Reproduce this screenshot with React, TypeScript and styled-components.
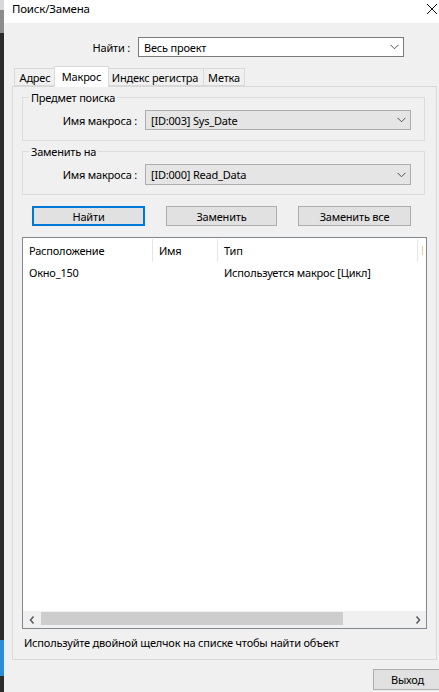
import React from "react";
import styled, { createGlobalStyle } from "styled-components";

const Global = createGlobalStyle`
  html, body { margin: 0; padding: 0; background: #2b2b2b; }
  body {
    font-family: "Noto Sans", "Liberation Sans", sans-serif;
    font-size: 11px;
    letter-spacing: -0.2px;
    color: #000;
  }
  * { box-sizing: border-box; }
`;

const Root = styled.div`
  display: flex;
  width: 439px;
  height: 692px;
  overflow: hidden;
`;

const LeftStrip = styled.div`
  width: 4px;
  flex: none;
  background: linear-gradient(
    to bottom,
    #d8d8d8 0px,
    #d8d8d8 10px,
    #8c8c8c 10px,
    #8c8c8c 33px,
    #2b2b2b 33px,
    #2b2b2b 640px,
    #2e8bd4 640px,
    #2e8bd4 676px,
    #2b2b2b 676px
  );
`;

const Window = styled.div`
  width: 435px;
  height: 692px;
  flex: none;
  background: #f0f0f0;
  display: flex;
  flex-direction: column;
  overflow: hidden;
`;

const TitleBar = styled.div`
  height: 23px;
  flex: none;
  background: #fff;
  display: flex;
  align-items: flex-start;
  justify-content: space-between;
  padding: 1px 2px 0 8px;
  line-height: 16px;
  font-size: 11.5px;
`;

const CloseButton = styled.div`
  width: 10px;
  height: 10px;
  margin-top: 3px;
  display: flex;
`;

const FindRow = styled.div`
  display: flex;
  align-items: center;
  margin-top: 14px;
  height: 20px;
`;

const FieldLabel = styled.div<{ $w: number }>`
  width: ${(p) => p.$w}px;
  text-align: right;
  white-space: nowrap;
  margin-right: 8px;
  flex: none;
`;

const Select = styled.div<{ $gray?: boolean; $h?: number }>`
  width: 266px;
  height: ${(p) => p.$h ?? 20}px;
  flex: none;
  display: flex;
  align-items: center;
  justify-content: space-between;
  padding: 0 4px 0 5px;
  background: ${(p) => (p.$gray ? "#e5e5e5" : "#ffffff")};
  border: 1px solid ${(p) => (p.$gray ? "#adadad" : "#7a7a7a")};
  white-space: nowrap;
`;

const TabStrip = styled.div`
  display: flex;
  align-items: flex-end;
  height: 20px;
  margin-top: 9px;
  padding-left: 11px;
  position: relative;
  z-index: 1;
`;

const Tab = styled.div<{ $w: number; $active?: boolean }>`
  width: ${(p) => p.$w}px;
  height: ${(p) => (p.$active ? 21 : 18)}px;
  margin: ${(p) => (p.$active ? "0 -2px -1px -2px" : "0 0 0 -1px")};
  border: 1px solid #d9d9d9;
  border-bottom: ${(p) => (p.$active ? "none" : "1px solid #d9d9d9")};
  background: ${(p) => (p.$active ? "#ffffff" : "#f0f0f0")};
  display: flex;
  align-items: ${(p) => (p.$active ? "flex-start" : "center")};
  padding-top: ${(p) => (p.$active ? "2px" : "0")};
  justify-content: center;
  white-space: nowrap;
  position: relative;
  z-index: ${(p) => (p.$active ? 2 : 1)};
`;

const Panel = styled.div`
  margin-left: 8px;
  width: 425px;
  height: 574px;
  flex: none;
  border: 1px solid #d9d9d9;
  background: #f0f0f0;
  padding: 10px 11px 0 9px;
  display: flex;
  flex-direction: column;
`;

const GroupBox = styled.div<{ $mt?: number }>`
  width: 403px;
  height: 44px;
  margin-top: ${(p) => p.$mt ?? 0}px;
  border: 1px solid #dcdcdc;
  display: flex;
  flex-direction: column;
`;

const GroupTitle = styled.div`
  align-self: flex-start;
  margin: -8px 0 0 6px;
  padding: 0 2px;
  height: 16px;
  line-height: 16px;
  background: #f0f0f0;
`;

const GroupRow = styled.div`
  display: flex;
  align-items: center;
  margin-top: 4px;
`;

const ButtonRow = styled.div`
  display: flex;
  gap: 21px;
  padding-left: 10px;
  margin-top: 11px;
`;

const Button = styled.div<{ $w: number; $default?: boolean }>`
  width: ${(p) => p.$w}px;
  height: 20px;
  display: flex;
  align-items: center;
  justify-content: center;
  background: #e1e1e1;
  border: ${(p) => (p.$default ? "2px solid #0078d7" : "1px solid #adadad")};
  white-space: nowrap;
`;

const List = styled.div`
  margin-top: 11px;
  width: 405px;
  height: 392px;
  border: 1px solid #828790;
  background: #fff;
  display: flex;
  flex-direction: column;
  overflow: hidden;
`;

const HeaderRow = styled.div`
  display: flex;
  height: 24px;
  flex: none;
`;

const HeaderCell = styled.div<{ $w: number }>`
  width: ${(p) => p.$w}px;
  flex: none;
  display: flex;
  align-items: center;
  padding-left: 6px;
  margin-top: 1px;
  border-right: 1px solid #e5e5e5;
  white-space: nowrap;
`;

const HeaderTail = styled.div`
  flex: 1;
  display: flex;
  align-items: center;
  padding-left: 4px;
`;

const ResizeMark = styled.div`
  width: 1px;
  height: 9px;
  background: #f2d37c;
`;

const DataRow = styled.div`
  display: flex;
  height: 20px;
  flex: none;
`;

const DataCell = styled.div<{ $w: number }>`
  width: ${(p) => p.$w}px;
  flex: none;
  display: flex;
  align-items: center;
  padding-left: 6px;
  white-space: nowrap;
`;

const ListSpacer = styled.div`
  flex: 1;
`;

const HScroll = styled.div`
  height: 17px;
  flex: none;
  display: flex;
  background: #f0f0f0;
`;

const ScrollArrow = styled.div`
  width: 17px;
  flex: none;
  display: flex;
  align-items: center;
  justify-content: center;
`;

const ScrollTrack = styled.div`
  flex: 1;
  display: flex;
  align-items: stretch;
  padding: 1px 0 3px 1px;
`;

const ScrollThumb = styled.div<{ $w: number }>`
  width: ${(p) => p.$w}px;
  background: #cdcdcd;
`;

const Status = styled.div`
  margin-top: 6px;
  padding-left: 2px;
  line-height: 16px;
  white-space: nowrap;
`;

const ExitButton = styled.div`
  align-self: flex-end;
  margin-top: 9px;
  width: 66px;
  height: 21px;
  display: flex;
  align-items: center;
  justify-content: center;
  background: #e1e1e1;
  border: 1px solid #adadad;
  border-right: none;
  padding-left: 2px;
`;

const Chevron = () => (
  <svg width="9" height="6" viewBox="0 0 9 6">
    <path d="M0.5 0.8 L4.5 4.8 L8.5 0.8" fill="none" stroke="#505050" strokeWidth="1" />
  </svg>
);

const ArrowLeft = () => (
  <svg width="6" height="8" viewBox="0 0 6 8">
    <path d="M4.5 0.5 L1.5 4 L4.5 7.5" fill="none" stroke="#606060" strokeWidth="1.6" />
  </svg>
);

const ArrowRight = () => (
  <svg width="6" height="8" viewBox="0 0 6 8">
    <path d="M1.5 0.5 L4.5 4 L1.5 7.5" fill="none" stroke="#606060" strokeWidth="1.6" />
  </svg>
);

const cols = [130, 65, 200];

export default function App() {
  return (
    <>
      <Global />
      <Root>
        <LeftStrip />
        <Window>
          <TitleBar>
            <span>Поиск/Замена</span>
            <CloseButton>
              <svg width="10" height="10" viewBox="0 0 10 10">
                <path d="M0 0 L10 10 M10 0 L0 10" stroke="#111" strokeWidth="1" />
              </svg>
            </CloseButton>
          </TitleBar>

          <FindRow>
            <FieldLabel $w={126}>Найти :</FieldLabel>
            <Select>
              <span>Весь проект</span>
              <Chevron />
            </Select>
          </FindRow>

          <TabStrip>
            <Tab $w={42}>Адрес</Tab>
            <Tab $w={55} $active>Макрос</Tab>
            <Tab $w={98}>Индекс регистра</Tab>
            <Tab $w={42}>Метка</Tab>
          </TabStrip>

          <Panel>
            <GroupBox>
              <GroupTitle>Предмет поиска</GroupTitle>
              <GroupRow>
                <FieldLabel $w={114}>Имя макроса :</FieldLabel>
                <Select $gray>
                  <span>[ID:003] Sys_Date</span>
                  <Chevron />
                </Select>
              </GroupRow>
            </GroupBox>

            <GroupBox $mt={10}>
              <GroupTitle>Заменить на</GroupTitle>
              <GroupRow>
                <FieldLabel $w={114}>Имя макроса :</FieldLabel>
                <Select $gray $h={21}>
                  <span>[ID:000] Read_Data</span>
                  <Chevron />
                </Select>
              </GroupRow>
            </GroupBox>

            <ButtonRow>
              <Button $w={113} $default>Найти</Button>
              <Button $w={111}>Заменить</Button>
              <Button $w={113}>Заменить все</Button>
            </ButtonRow>

            <List>
              <HeaderRow>
                <HeaderCell $w={cols[0]}>Расположение</HeaderCell>
                <HeaderCell $w={cols[1]}>Имя</HeaderCell>
                <HeaderCell $w={cols[2]}>Тип</HeaderCell>
                <HeaderTail>
                  <ResizeMark />
                </HeaderTail>
              </HeaderRow>
              <DataRow>
                <DataCell $w={cols[0]}>Окно_150</DataCell>
                <DataCell $w={cols[1]}></DataCell>
                <DataCell $w={cols[2]}>Используется макрос [Цикл]</DataCell>
              </DataRow>
              <ListSpacer />
              <HScroll>
                <ScrollArrow>
                  <ArrowLeft />
                </ScrollArrow>
                <ScrollTrack>
                  <ScrollThumb $w={302} />
                </ScrollTrack>
                <ScrollArrow>
                  <ArrowRight />
                </ScrollArrow>
              </HScroll>
            </List>

            <Status>Используйте двойной щелчок на списке чтобы найти объект</Status>
          </Panel>

          <ExitButton>Выход</ExitButton>
        </Window>
      </Root>
    </>
  );
}
